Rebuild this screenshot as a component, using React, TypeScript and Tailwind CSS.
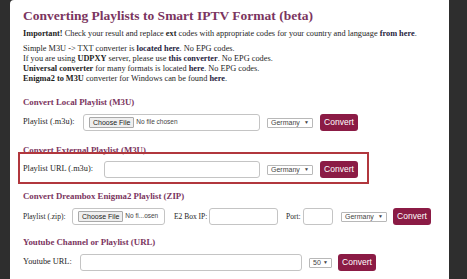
import React from 'react';

const SERIF = "font-['Liberation_Serif',serif]";

const B = ({ children, link }: { children: React.ReactNode; link?: boolean }) => (
  <b className={`font-['Liberation_Serif',serif] font-bold ${link ? 'text-[#1f2340]' : ''}`}>{children}</b>
);

const Select = ({ label, w }: { label: string; w: string }) => (
  <div className={`flex h-[10px] ${w} shrink-0 items-center justify-between rounded-[1px] border border-[#b8b8b8] bg-white px-[3px] font-['Liberation_Sans',Arial,sans-serif] text-[7px] leading-none text-[#444]`}>
    <span>{label}</span>
    <span className="text-[5px]">▼</span>
  </div>
);

const ConvertBtn = () => (
  <button className="flex h-[17px] w-[38px] shrink-0 items-center justify-center rounded-[3px] bg-[#8b1b45] font-['Liberation_Sans',Arial,sans-serif] text-[8.5px] leading-none text-white">
    Convert
  </button>
);

const FileInput = ({ w, text }: { w: string; text: string }) => (
  <div className={`flex h-[17px] ${w} shrink-0 items-center overflow-hidden whitespace-nowrap rounded-[3px] border border-[#c4c4c4] bg-white px-[5px]`}>
    <span className="flex h-[11px] items-center rounded-[1px] border border-[#a9a9a9] bg-[#efefef] px-[3px] font-['Liberation_Sans',Arial,sans-serif] text-[7px] leading-none text-[#222]">
      Choose File
    </span>
    <span className="ml-[2px] font-['Liberation_Sans',Arial,sans-serif] text-[6.5px] leading-none text-[#444]">{text}</span>
  </div>
);

const TextInput = ({ w }: { w: string }) => (
  <div className={`h-[17px] ${w} shrink-0 rounded-[3px] border border-[#c4c4c4] bg-white`} />
);

const Label = ({ w, children }: { w: string; children: React.ReactNode }) => (
  <span className={`${w} shrink-0 font-['Liberation_Serif',serif]`}>{children}</span>
);

const Heading = ({ mt, children }: { mt: string; children: React.ReactNode }) => (
  <h2 className={`${mt} font-['Liberation_Serif',serif] text-[8.8px] font-bold leading-[10px] text-[#7b3560]`}>{children}</h2>
);

export default function App() {
  return (
    <div className="flex h-[279px] w-[467px] overflow-hidden bg-[#2e2e2e]">
      <div className={`relative ml-[10px] h-full w-[439px] rounded-tl-[4px] bg-white pl-[13px] text-[#1e1e1e] ${SERIF}`}>
        <h1 className="pt-[8px] font-['Liberation_Serif',serif] text-[13.5px] font-bold leading-[16px] text-[#7b3560]">
          Converting Playlists to Smart IPTV Format (beta)
        </h1>
        <p className="mt-[5px] whitespace-nowrap font-['Liberation_Serif',serif] text-[8.3px] leading-[10px]">
          <B>Important!</B> Check your result and replace <B>ext</B> codes with appropriate codes for your country and language <B link>from here</B>.
        </p>
        <div className="mt-[5px] whitespace-nowrap font-['Liberation_Serif',serif] text-[8.3px] leading-[10px]">
          <div className={SERIF}>Simple M3U -&gt; TXT converter is <B link>located here</B>. No EPG codes.</div>
          <div className={SERIF}>If you are using <B>UDPXY</B> server, please use <B link>this converter</B>. No EPG codes.</div>
          <div className={SERIF}><B>Universal converter</B> for many formats is located <B link>here</B>. No EPG codes.</div>
          <div className={SERIF}><B>Enigma2 to M3U</B> converter for Windows can be found <B link>here</B>.</div>
        </div>

        <Heading mt="mt-[13px]">Convert Local Playlist (M3U)</Heading>
        <div className="mt-[7px] flex items-center whitespace-nowrap text-[8.3px]">
          <Label w="w-[60px]">Playlist (.m3u):</Label>
          <FileInput w="w-[177px]" text="No file chosen" />
          <div className="ml-[7px]"><Select label="Germany" w="w-[46px]" /></div>
          <div className="ml-[7px]"><ConvertBtn /></div>
        </div>

        <Heading mt="mt-[14px]">Convert External Playlist (M3U)</Heading>
        <div className="mt-[6px] flex items-center whitespace-nowrap text-[8.3px]">
          <Label w="w-[81px]">Playlist URL (.m3u):</Label>
          <TextInput w="w-[156px]" />
          <div className="ml-[7px]"><Select label="Germany" w="w-[46px]" /></div>
          <div className="ml-[7px]"><ConvertBtn /></div>
        </div>

        <Heading mt="mt-[13px]">Convert Dreambox Enigma2 Playlist (ZIP)</Heading>
        <div className="mt-[7px] flex items-center whitespace-nowrap text-[7.5px]">
          <Label w="w-[49px]">Playlist (.zip):</Label>
          <FileInput w="w-[93px]" text="No fi...osen" />
          <Label w="ml-[9px] w-[35px]">E2 Box IP:</Label>
          <TextInput w="w-[69px]" />
          <Label w="ml-[8px] w-[17px]">Port:</Label>
          <TextInput w="w-[30px]" />
          <div className="ml-[8px]"><Select label="Germany" w="w-[46px]" /></div>
          <div className="ml-[6px]"><ConvertBtn /></div>
        </div>

        <Heading mt="mt-[12px]">Youtube Channel or Playlist (URL)</Heading>
        <div className="mt-[7px] flex items-center whitespace-nowrap text-[8.3px]">
          <Label w="w-[57px]">Youtube URL:</Label>
          <TextInput w="w-[222px]" />
          <div className="ml-[7px]"><Select label="50" w="w-[23px]" /></div>
          <div className="ml-[6px]"><ConvertBtn /></div>
        </div>

        <div className="pointer-events-none absolute left-[8px] top-[152px] h-[32px] w-[351px] border-2 border-[#b1373d]" />
      </div>
    </div>
  );
}
